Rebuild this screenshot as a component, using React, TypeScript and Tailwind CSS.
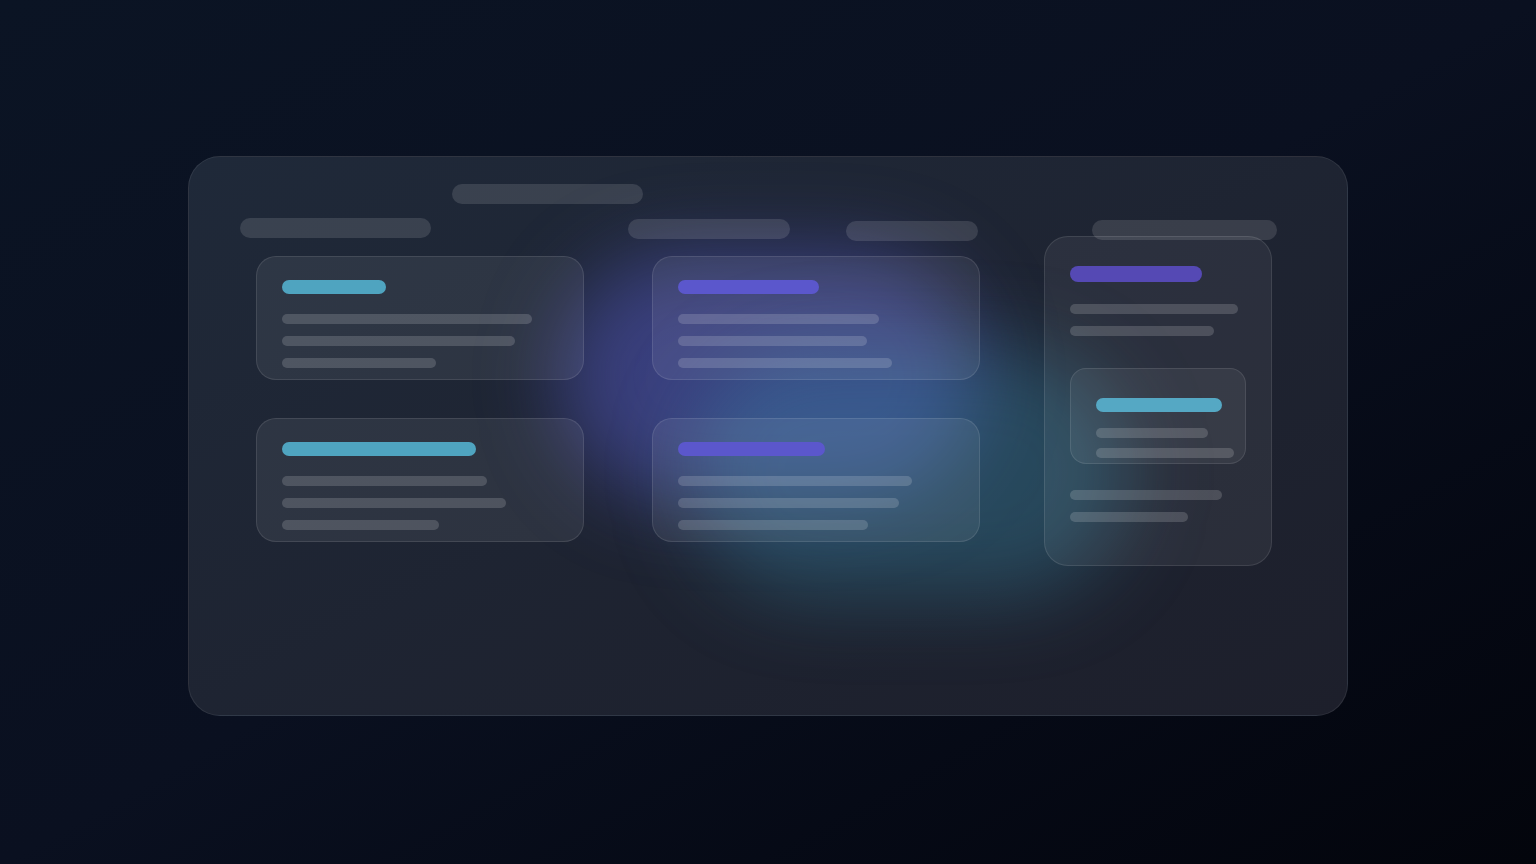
import React from 'react';

const Bar: React.FC<{ className: string }> = ({ className }) => <div className={`rounded-full ${className}`} />;

const Card: React.FC<{ title: string; titleColor: string; lines: string[] }> = ({ title, titleColor, lines }) => (
  <div className="h-[124px] w-[328px] rounded-[20px] border border-white/10 bg-white/[0.07] pl-[25px] pt-[23px]">
    <Bar className={`h-[14px] ${title} ${titleColor}`} />
    <div className="mt-[20px] flex flex-col gap-[12px]">
      {lines.map((w, i) => (
        <Bar key={i} className={`h-[10px] bg-white/[0.16] ${w}`} />
      ))}
    </div>
  </div>
);

export default function App() {
  return (
    <div className="h-screen w-full overflow-hidden bg-linear-to-br from-[#0b1424] via-[#0a1020] to-[#03050c] pt-[156px]">
      <div className="relative mx-auto h-[560px] w-[1160px] overflow-hidden rounded-[32px] border border-white/[0.08] bg-linear-to-br from-[#1f2939] to-[#1d1f2b]">
        {/* glow */}
        <div className="absolute left-[370px] top-[95px] h-[250px] w-[420px] rounded-full bg-[#5b5fd6]/45 blur-[40px]" />
        <div className="absolute left-[500px] top-[190px] h-[250px] w-[440px] rounded-full bg-[#3a8fb0]/35 blur-[40px]" />

        <div className="relative">
          <div className="pl-[263px] pt-[27px]">
            <Bar className="h-5 w-[191px] bg-white/[0.12]" />
          </div>
          <div className="mt-[14px] flex h-[24px] items-start pl-[51px]">
            <Bar className="h-5 w-[191px] bg-white/[0.12]" />
            <Bar className="ml-[197px] mt-[1px] h-5 w-[162px] bg-white/[0.12]" />
            <Bar className="ml-[56px] mt-[3px] h-5 w-[132px] bg-white/[0.12]" />
            <Bar className="relative z-10 ml-[114px] mt-[2px] h-5 w-[185px] bg-white/[0.12]" />
          </div>

          <div className="mt-[14px] flex items-start pl-[67px]">
            <div className="flex flex-col gap-[38px]">
              <Card title="w-[104px]" titleColor="bg-[#4fa4c0]" lines={['w-[250px]', 'w-[233px]', 'w-[154px]']} />
              <Card title="w-[194px]" titleColor="bg-[#4fa4c0]" lines={['w-[205px]', 'w-[224px]', 'w-[157px]']} />
            </div>
            <div className="ml-[68px] flex flex-col gap-[38px]">
              <Card title="w-[141px]" titleColor="bg-[#5b57cc]" lines={['w-[201px]', 'w-[189px]', 'w-[214px]']} />
              <Card title="w-[147px]" titleColor="bg-[#5b57cc]" lines={['w-[234px]', 'w-[221px]', 'w-[190px]']} />
            </div>
            <div className="-mt-[20px] ml-[64px] h-[330px] w-[228px] rounded-[24px] border border-white/10 bg-white/[0.06] pl-[25px] pt-[29px]">
              <Bar className="h-4 w-[132px] bg-[#5549b4]" />
              <div className="mt-[22px] flex flex-col gap-[12px]">
                <Bar className="h-[10px] w-[168px] bg-white/[0.16]" />
                <Bar className="h-[10px] w-[144px] bg-white/[0.16]" />
              </div>
              <div className="mt-[32px] h-[96px] w-[176px] rounded-[16px] border border-white/10 bg-white/[0.06] pl-[25px] pt-[29px]">
                <Bar className="h-[14px] w-[126px] bg-[#55a8c4]" />
                <div className="mt-[16px] flex flex-col gap-[10px]">
                  <Bar className="h-[10px] w-[112px] bg-white/[0.16]" />
                  <Bar className="h-[10px] w-[138px] bg-white/[0.16]" />
                </div>
              </div>
              <div className="mt-[26px] flex flex-col gap-[12px]">
                <Bar className="h-[10px] w-[152px] bg-white/[0.16]" />
                <Bar className="h-[10px] w-[118px] bg-white/[0.16]" />
              </div>
            </div>
          </div>
        </div>
      </div>
    </div>
  );
}
